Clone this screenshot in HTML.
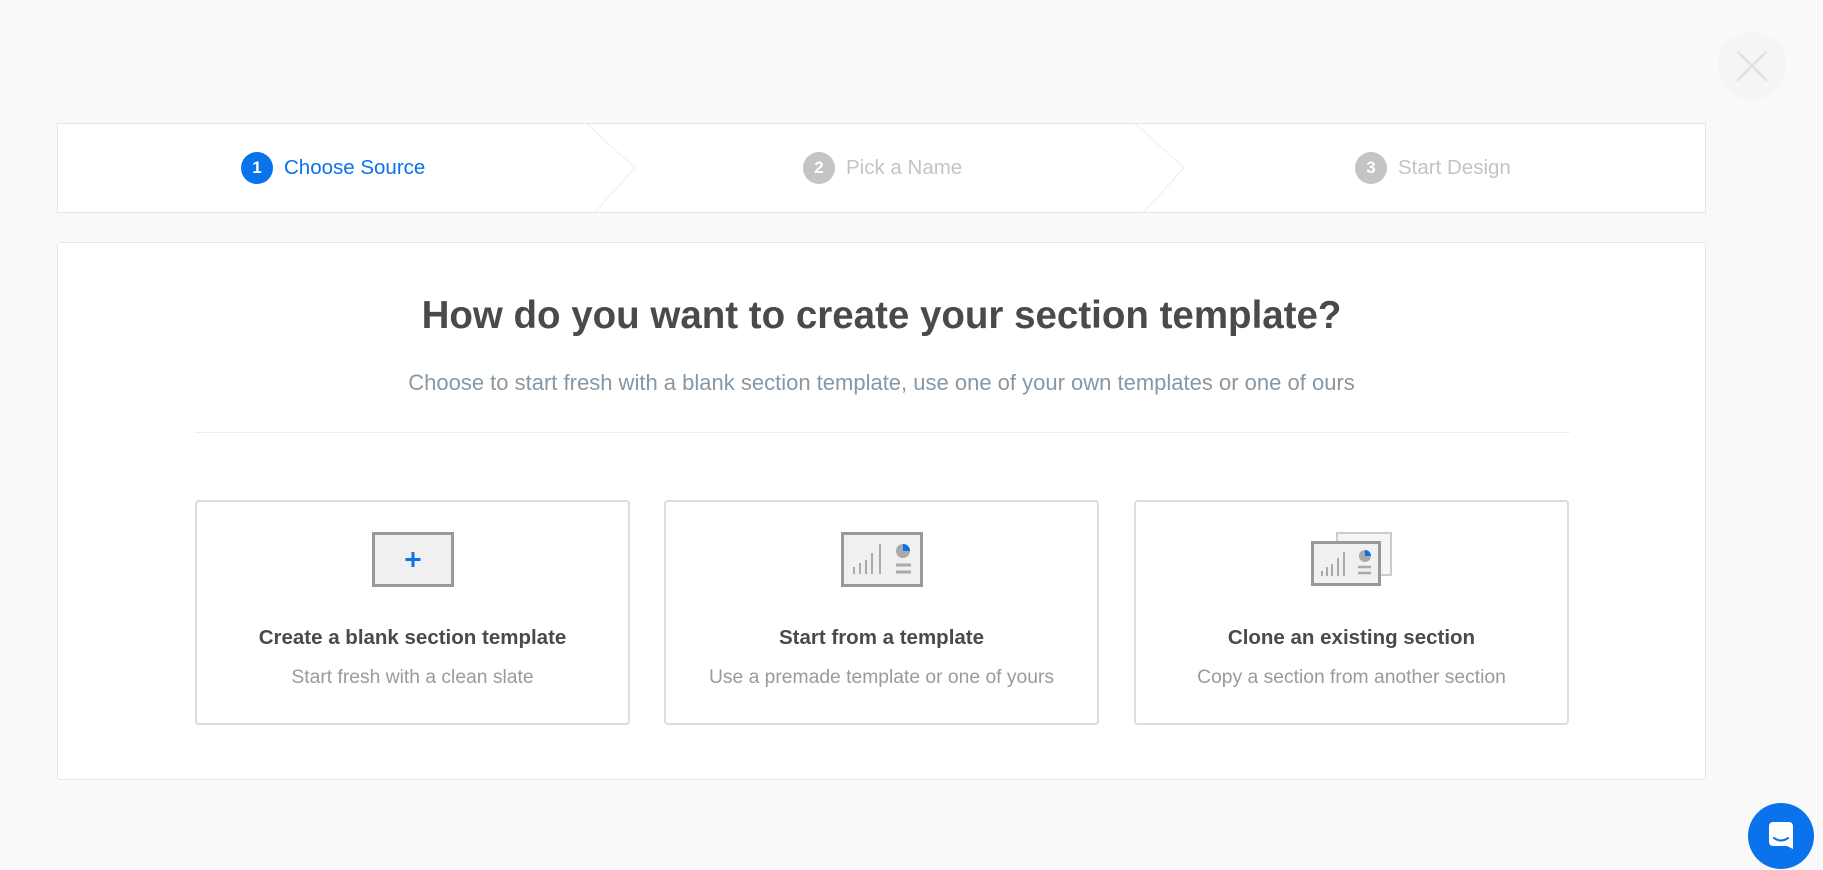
<!DOCTYPE html>
<html><head><meta charset="utf-8"><style>
*{box-sizing:border-box;margin:0;padding:0}
body{width:1823px;height:868px;background:#f9f9f9;font-family:"Liberation Sans",sans-serif;position:relative;overflow:hidden}
.steps{position:absolute;left:57px;top:123px;width:1649px;height:90px;background:#fff;border:1px solid #e4e6ea}
.step{position:absolute;top:0;height:88px;display:flex;align-items:center;font-size:20.5px;color:#c4c4c4}
.num{width:32px;height:32px;border-radius:50%;background:#c4c4c4;color:#fff;font-weight:bold;font-size:17px;display:flex;align-items:center;justify-content:center;margin-right:11px}
.step.active{color:#0a73eb}.step.active .num{background:#0a73eb}
.main{position:absolute;left:57px;top:242px;width:1649px;height:538px;background:#fff;border:1px solid #e4e6ea;border-radius:3px}
h1{position:absolute;left:57px;width:1649px;top:294px;text-align:center;font-size:38.5px;color:#4a4a4a;font-weight:bold}
.sub{position:absolute;left:57px;width:1649px;top:370px;text-align:center;font-size:22px;color:#8797a3}
.hr{position:absolute;left:195px;top:432px;width:1375px;height:1px;background:#eceef0}
.card{position:absolute;top:500px;width:435px;height:225px;border:2px solid #dcdcdc;border-radius:4px;background:#fff;text-align:center}
.card svg{position:absolute;left:50%;top:30px;transform:translateX(-50%)}
.card .t{position:absolute;left:0;right:0;top:124px;font-size:20.5px;font-weight:bold;color:#4a4a4a}
.card .d{position:absolute;left:0;right:0;top:165px;font-size:19.3px;color:#9a9a9a}
</style></head><body>
<svg style="position:absolute;left:1717px;top:31px" width="70" height="70"><circle cx="35" cy="35" r="34" fill="#f5f5f5"/><path d="M21 21L49 49M49 21L21 49" stroke="#e0e2e4" stroke-width="2.5" stroke-linecap="round"/></svg>
<div class="steps">
<svg style="position:absolute;left:0;top:0" width="1647" height="88"><path d="M529 0L577 44L537 88M1078 0L1126 44L1086 88" fill="none" stroke="#eceef0" stroke-width="1"/></svg>
<div class="step active" style="left:183px"><span class="num">1</span>Choose Source</div>
<div class="step" style="left:745px"><span class="num">2</span>Pick a Name</div>
<div class="step" style="left:1297px"><span class="num">3</span>Start Design</div>
</div>
<div class="main"></div>
<h1>How do you want to create your section template?</h1>
<div class="sub">Choose to start fresh with a blank section template, use one of your own templates or one of ours</div>
<div class="hr"></div>
<div class="card" style="left:195px"><svg width="82" height="55"><rect x="1.5" y="1.5" width="79" height="52" fill="#f0f0f0" stroke="#999" stroke-width="3"/><path d="M41 20v15M33.5 27.5h15" stroke="#0a73eb" stroke-width="3"/></svg><div class="t">Create a blank section template</div><div class="d">Start fresh with a clean slate</div></div>
<div class="card" style="left:664px"><svg width="82" height="55"><rect x="1.5" y="1.5" width="79" height="52" fill="#f0f0f0" stroke="#999" stroke-width="3"/><path d="M13 42v-7M19 42v-11M25 42v-14M31 42v-21M39 42v-30" stroke="#aaa" stroke-width="2"/><circle cx="62" cy="19" r="7" fill="#aaa"/><path d="M62 19V12A7 7 0 0 1 69 19Z" fill="#0a73eb"/><path d="M55 33h15M55 40h15" stroke="#aaa" stroke-width="3"/></svg><div class="t">Start from a template</div><div class="d">Use a premade template or one of yours</div></div>
<div class="card" style="left:1134px"><svg width="82" height="55"><rect x="26" y="1" width="54" height="42" fill="#f5f5f5" stroke="#ccc" stroke-width="2"/><rect x="1.5" y="10.5" width="67" height="42" fill="#f0f0f0" stroke="#999" stroke-width="3"/><path d="M11 44v-5M16 44v-9M21 44v-12M27 44v-18M33 44v-24" stroke="#aaa" stroke-width="2"/><circle cx="54" cy="24" r="6" fill="#aaa"/><path d="M54 24V18A6 6 0 0 1 60 24Z" fill="#0a73eb"/><path d="M47 35h13M47 41h13" stroke="#aaa" stroke-width="2.5"/></svg><div class="t">Clone an existing section</div><div class="d">Copy a section from another section</div></div>
<svg style="position:absolute;left:1747px;top:802px" width="68" height="68"><circle cx="34" cy="34" r="33" fill="#0a73eb"/><path d="M22 24a4 4 0 0 1 4-4h16a4 4 0 0 1 4 4v23l-6-3H26a4 4 0 0 1-4-4Z" fill="#fff"/><path d="M27 36q7 5 14 0" stroke="#0a73eb" stroke-width="2" fill="none" stroke-linecap="round"/></svg>
</body></html>
